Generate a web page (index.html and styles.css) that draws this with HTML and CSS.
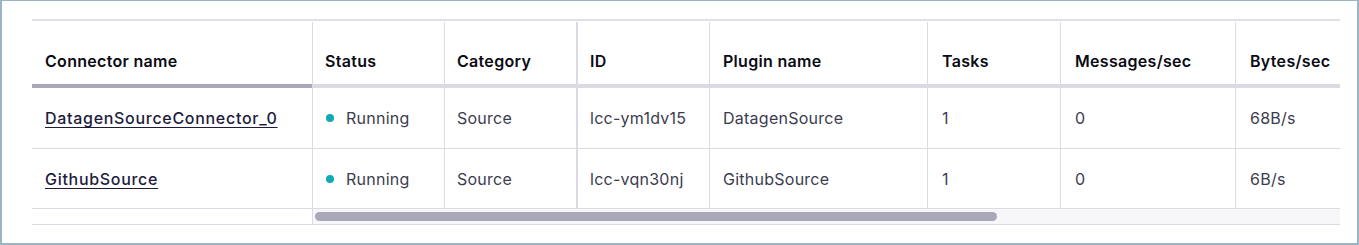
FILE: index.html
```html
<!DOCTYPE html>
<html lang="en">
<head>
<meta charset="utf-8">
<title>Connectors</title>
<link rel="stylesheet" href="styles.css">
</head>
<body>
<div class="frame">
  <div class="table">
    <div class="row head">
      <div class="cell">Connector name</div>
      <div class="cell">Status</div>
      <div class="cell">Category</div>
      <div class="cell thick">ID</div>
      <div class="cell">Plugin name</div>
      <div class="cell">Tasks</div>
      <div class="cell">Messages/sec</div>
      <div class="cell">Bytes/sec</div>
    </div>
    <div class="sortbar"><span class="sorted"></span><span class="rest"></span></div>
    <div class="row body">
      <div class="cell"><a class="link" href="#">DatagenSourceConnector_0</a></div>
      <div class="cell"><span class="dot"></span>Running</div>
      <div class="cell">Source</div>
      <div class="cell thick">lcc-ym1dv15</div>
      <div class="cell">DatagenSource</div>
      <div class="cell">1</div>
      <div class="cell">0</div>
      <div class="cell">68B/s</div>
    </div>
    <div class="row body short">
      <div class="cell"><a class="link" href="#">GithubSource</a></div>
      <div class="cell"><span class="dot"></span>Running</div>
      <div class="cell">Source</div>
      <div class="cell thick">lcc-vqn30nj</div>
      <div class="cell">GithubSource</div>
      <div class="cell">1</div>
      <div class="cell">0</div>
      <div class="cell">6B/s</div>
    </div>
    <div class="scrollrow">
      <div class="spacer"></div>
      <div class="track"><div class="thumb"></div></div>
    </div>
  </div>
</div>
</body>
</html>
```

FILE: styles.css
```css
* { box-sizing: border-box; }
html, body { margin: 0; padding: 0; background: #fff; }
body { font-family: Inter, "Noto Sans", sans-serif; }

.frame {
  width: 1359px;
  height: 245px;
  border-style: solid;
  border-color: #9bb5c4;
  border-width: 1px 2px 2px 2px;
  padding: 18px 0 0 30px;
  background: #fff;
}

.table {
  width: 1308px;
  overflow: hidden;
  border-top: 2px solid #e0dfe7;
  display: flex;
  flex-direction: column;
}

.row {
  display: grid;
  grid-template-columns: 280px 132px 132px 133px 218px 133px 175px 160px;
  width: max-content;
}

.cell {
  border-left: 1px solid #dcdbe4;
  padding: 0 12px;
  white-space: nowrap;
}
.cell:first-child { border-left: none; padding-left: 13px; }
.cell.thick { border-left-width: 2px; }
.cell:nth-child(5) { padding-left: 13px; }
.cell:nth-child(n+6) { padding-left: 14px; }

.head { padding-top: 1px; }
.head .cell {
  height: 62px;
  padding-top: 29px;
  font-size: 16px;
  line-height: 20px;
  font-weight: 600;
  letter-spacing: 0.3px;
  color: #0b0b14;
}

.sortbar { display: flex; height: 4px; }
.sortbar .sorted { width: 280px; background: #a9a8b9; }
.sortbar .rest { flex: 1; background: #dcdbe4; }

.body { border-bottom: 1px solid #dcdbe4; }
.body .cell {
  height: 60px;
  display: flex;
  align-items: center;
  font-size: 16px;
  line-height: 24px;
  font-weight: 400;
  letter-spacing: 0.25px;
  color: #3c3c4f;
}
.body.short .cell { height: 59px; }

.link {
  color: #1d1c3d;
  font-weight: 500;
  letter-spacing: 0.7px;
  text-decoration: underline;
  text-decoration-thickness: 1px;
  text-underline-offset: 3px;
}

.dot {
  width: 8px;
  height: 8px;
  border-radius: 50%;
  background: #10a9b4;
  margin: 0 12px 0 1px;
  flex: none;
}

.scrollrow {
  display: flex;
  height: 16px;
  border-bottom: 1px solid #dcdbe4;
}
.spacer { width: 280px; flex: none; }
.track {
  flex: 1;
  background: #f7f7fa;
  border-left: 1px solid #dcdbe4;
  padding: 3px 0 0 2px;
}
.thumb {
  width: 682px;
  height: 9px;
  border-radius: 5px;
  background: #a9a8b9;
}
```
